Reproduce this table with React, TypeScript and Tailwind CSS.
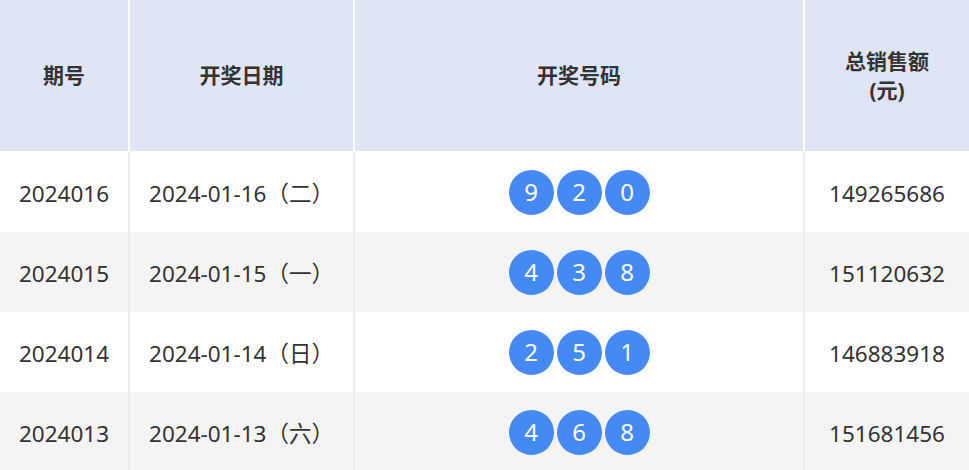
const rows = [
  { issue: '2024016', date: '2024-01-16（二）', balls: ['9', '2', '0'], sales: '149265686' },
  { issue: '2024015', date: '2024-01-15（一）', balls: ['4', '3', '8'], sales: '151120632' },
  { issue: '2024014', date: '2024-01-14（日）', balls: ['2', '5', '1'], sales: '146883918' },
  { issue: '2024013', date: '2024-01-13（六）', balls: ['4', '6', '8'], sales: '151681456' },
]

const cols = 'grid grid-cols-[130px_225px_450px_1fr]'
const font = { fontFamily: '"Noto Sans", "Noto Sans CJK SC", sans-serif' }

export default function App() {
  return (
    <div className="h-[470px] w-[969px] overflow-hidden bg-white text-[#333]" style={font}>
      {/* header */}
      <div className={`${cols} h-[152px] border-b border-white bg-[#dfe5f5] text-[21px] font-bold`}>
        <div className="flex items-center justify-center border-r-2 border-white">期号</div>
        <div className="flex items-center justify-center border-r-2 border-white">开奖日期</div>
        <div className="flex items-center justify-center border-r-2 border-white">开奖号码</div>
        <div className="flex items-center justify-center text-center leading-[29px]">
          总销售额
          <br />
          (元)
        </div>
      </div>

      {rows.map((r, i) => (
        <div
          key={r.issue}
          className={`${cols} h-[80px] text-[22.5px] ${i % 2 === 1 ? 'bg-[#f4f4f4]' : 'bg-white'}`}
        >
          <div className="flex items-center justify-center border-r-2 border-[#ececec] pt-[3px]">{r.issue}</div>
          <div className="flex items-center justify-center border-r-2 border-[#ececec] pt-[3px]">{r.date}</div>
          <div className="flex items-center justify-center gap-[3px] border-r-2 border-[#ececec]">
            {r.balls.map((b, j) => (
              <span
                key={j}
                className="flex h-[45px] w-[45px] items-center justify-center rounded-full bg-[#4589f5] text-[24px] text-white"
              >
                {b}
              </span>
            ))}
          </div>
          <div className="flex items-center justify-center pt-[3px]">{r.sales}</div>
        </div>
      ))}
    </div>
  )
}
